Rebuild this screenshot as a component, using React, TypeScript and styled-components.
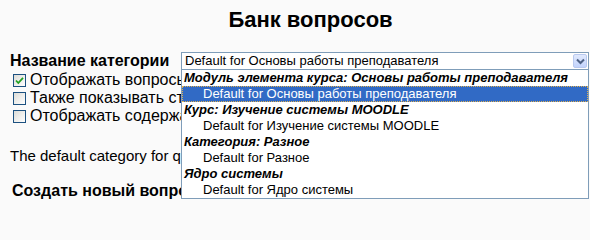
import styled, { createGlobalStyle } from "styled-components";

const GlobalStyle = createGlobalStyle`
  html, body {
    margin: 0;
    padding: 0;
    background: #fafafa;
    overflow: hidden;
  }
  body {
    font-family: "Liberation Sans", Arial, sans-serif;
    color: #000000;
  }
`;

type Option = { label: string; selected?: boolean };
type Group = { title: string; options: Option[] };

const groups: Group[] = [
  {
    title: "Модуль элемента курса: Основы работы преподавателя",
    options: [{ label: "Default for Основы работы преподавателя", selected: true }],
  },
  {
    title: "Курс: Изучение системы MOODLE",
    options: [{ label: "Default for Изучение системы MOODLE" }],
  },
  {
    title: "Категория: Разное",
    options: [{ label: "Default for Разное" }],
  },
  {
    title: "Ядро системы",
    options: [{ label: "Default for Ядро системы" }],
  },
];

const checks = [
  { label: "Отображать вопросы из подкатегорий", checked: true },
  { label: "Также показывать старые вопросы", checked: false },
  { label: "Отображать содержание вопроса в списке", checked: false },
];

const CheckBox = ({ checked }: { checked: boolean }) => (
  <Box>
    {checked && (
      <svg width="9" height="9" viewBox="0 0 9 9">
        <path d="M1 4.5 L3.3 7 L8 1.8" fill="none" stroke="#21a121" strokeWidth="1.8" />
      </svg>
    )}
  </Box>
);

const Arrow = () => (
  <ArrowButton>
    <svg width="9" height="7" viewBox="0 0 9 7">
      <path d="M1 1.5 L4.5 5 L8 1.5" fill="none" stroke="#4d6185" strokeWidth="2" />
    </svg>
  </ArrowButton>
);

const CategorySelect = () => (
  <SelectWrap>
    <SelectBox>
      <span>Default for Основы работы преподавателя</span>
      <Arrow />
    </SelectBox>
    <DropList>
      {groups.map((g) => (
        <div key={g.title}>
          <GroupLabel>{g.title}</GroupLabel>
          {g.options.map((o) => (
            <OptionRow key={o.label} $selected={!!o.selected}>
              {o.label}
            </OptionRow>
          ))}
        </div>
      ))}
    </DropList>
  </SelectWrap>
);

const App = () => {
  return (
    <>
      <GlobalStyle />
      <Page>
        <Title>Банк вопросов</Title>
        <FieldRow>
          <FieldLabel>Название категории</FieldLabel>
          <CategorySelect />
        </FieldRow>
        <CheckList>
          {checks.map((c) => (
            <CheckRow key={c.label}>
              <CheckBox checked={c.checked} />
              <span>{c.label}</span>
            </CheckRow>
          ))}
        </CheckList>
        <Info>The default category for questions shared in context</Info>
        <SubHeading>Создать новый вопрос</SubHeading>
      </Page>
    </>
  );
};

export default App;

const Page = styled.div`
  width: 590px;
  height: 200px;
  overflow: hidden;
  white-space: nowrap;
`;
const Title = styled.h2`
  width: 621px;
  margin: 8px 0 0;
  font-size: 22px;
  line-height: 24px;
  font-weight: bold;
  text-align: center;
`;
const FieldRow = styled.div`
  display: flex;
  align-items: center;
  margin-top: 20px;
  padding-left: 10px;
  height: 18px;
`;
const FieldLabel = styled.div`
  width: 171px;
  font-size: 16px;
  line-height: 18px;
  font-weight: bold;
`;
const SelectWrap = styled.div`
  position: relative;
  width: 408px;
  z-index: 2;
`;
const SelectBox = styled.div`
  display: flex;
  align-items: center;
  justify-content: space-between;
  box-sizing: border-box;
  height: 18px;
  padding: 0 1px 0 3px;
  background: #ffffff;
  border: 1px solid #7f9db9;
  font-size: 13px;
  line-height: 16px;
`;
const ArrowButton = styled.div`
  display: flex;
  align-items: center;
  justify-content: center;
  width: 14px;
  height: 14px;
  box-sizing: border-box;
  border: 1px solid #b9c9ef;
  border-radius: 2px;
  background: linear-gradient(#e0e9fd, #c2d3fc);
`;
const DropList = styled.div`
  position: absolute;
  top: 100%;
  left: 0;
  right: 0;
  background: #ffffff;
  border: 1px solid #7f9db9;
  border-top: none;
  font-size: 13px;
`;
const GroupLabel = styled.div`
  height: 16px;
  line-height: 16px;
  padding-left: 2px;
  font-weight: bold;
  font-style: italic;
`;
const OptionRow = styled.div<{ $selected: boolean }>`
  box-sizing: border-box;
  height: 16px;
  line-height: 14px;
  padding-left: 20px;
  border: 1px dotted ${(p) => (p.$selected ? "#e0b050" : "transparent")};
  background: ${(p) => (p.$selected ? "#316ac5" : "transparent")};
  color: ${(p) => (p.$selected ? "#ffffff" : "#000000")};
`;
const CheckList = styled.div`
  margin-top: 1px;
  padding-left: 13px;
`;
const CheckRow = styled.div`
  display: flex;
  align-items: center;
  gap: 4px;
  height: 18px;
  font-size: 16px;
  line-height: 18px;
`;
const Box = styled.span`
  display: flex;
  align-items: center;
  justify-content: center;
  width: 13px;
  height: 13px;
  box-sizing: border-box;
  border: 1px solid #1c5180;
  background: linear-gradient(135deg, #dcdcd7, #ffffff);
`;
const Info = styled.div`
  margin-top: 22px;
  padding-left: 10px;
  font-size: 15px;
  line-height: 18px;
`;
const SubHeading = styled.div`
  margin-top: 17px;
  padding-left: 12px;
  font-size: 16px;
  line-height: 18px;
  font-weight: bold;
`;
